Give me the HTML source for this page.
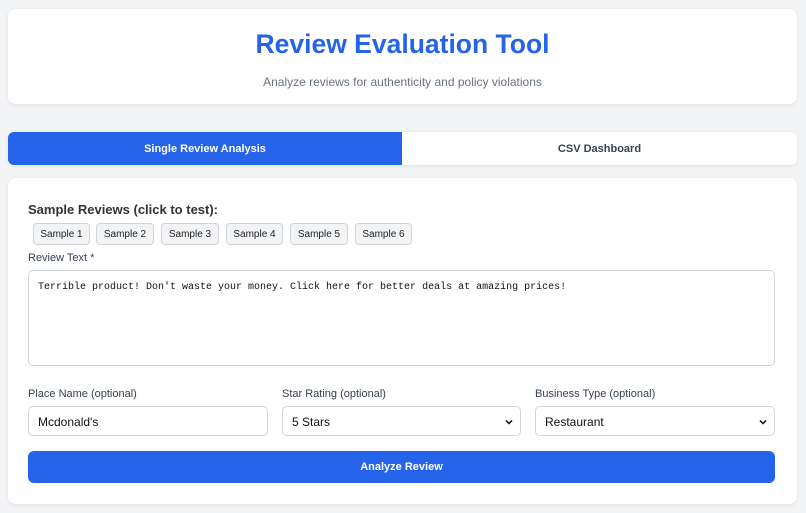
<!DOCTYPE html>
<html><head><style>
*{box-sizing:border-box;margin:0;padding:0}
body{width:806px;height:513px;background:#f3f4f6;font-family:"Liberation Sans",Arial,sans-serif;position:relative;overflow:hidden}
.a{position:absolute}
.card{background:#fff;border-radius:8px;box-shadow:0 1px 4px rgba(0,0,0,.08)}
.sb{position:absolute;top:223px;height:22px;border:1px solid #d1d5db;background:#f3f4f6;border-radius:4px;font-size:10px;color:#222;text-align:center;line-height:22px}
.lbl{position:absolute;font-size:11px;color:#374151}
.inp{position:absolute;top:406px;height:30px;border:1px solid #d1d5db;border-radius:5px;background:#fff;font-size:12px;color:#111;padding-left:9px;line-height:30px}
.chev{position:absolute;right:7px;top:12px}
</style></head><body>
<div class="a card" style="left:8px;top:9px;width:789px;height:95px"></div>
<div class="a" style="left:8px;width:789px;top:29px;text-align:center;font-size:26.5px;font-weight:bold;color:#2563eb">Review Evaluation Tool</div>
<div class="a" style="left:8px;width:789px;top:75px;text-align:center;font-size:12px;color:#6b7280">Analyze reviews for authenticity and policy violations</div>

<div class="a card" style="left:8px;top:132px;width:789px;height:33px;border-radius:6px;overflow:hidden">
<div class="a" style="left:0;top:0;width:394px;height:33px;background:#2563eb;color:#fff;font-size:11px;font-weight:bold;text-align:center;line-height:34px">Single Review Analysis</div>
<div class="a" style="left:394px;top:0;width:395px;height:33px;color:#374151;font-size:11px;font-weight:bold;text-align:center;line-height:34px">CSV Dashboard</div>
</div>

<div class="a card" style="left:8px;top:178px;width:789px;height:326px"></div>
<div class="a" style="left:28px;top:202px;font-size:13px;font-weight:bold;color:#333">Sample Reviews (click to test):</div>
<div class="sb" style="left:33px;width:57px">Sample 1</div>
<div class="sb" style="left:96px;width:58px">Sample 2</div>
<div class="sb" style="left:161px;width:58px">Sample 3</div>
<div class="sb" style="left:226px;width:57px">Sample 4</div>
<div class="sb" style="left:290px;width:58px">Sample 5</div>
<div class="sb" style="left:355px;width:57px">Sample 6</div>
<div class="lbl" style="left:28px;top:252px">Review Text *</div>
<div class="a" style="left:28px;top:270px;width:747px;height:96px;border:1px solid #d1d5db;border-radius:5px;background:#fff;font-family:'Liberation Mono',monospace;font-size:10px;color:#111;padding:11px 9px">Terrible product! Don't waste your money. Click here for better deals at amazing prices!</div>
<div class="lbl" style="left:28px;top:388px">Place Name (optional)</div>
<div class="lbl" style="left:282px;top:388px">Star Rating (optional)</div>
<div class="lbl" style="left:535px;top:388px">Business Type (optional)</div>
<div class="inp" style="left:28px;width:240px">Mcdonald's</div>
<div class="inp" style="left:282px;width:239px">5 Stars<svg class="chev" width="8" height="6" viewBox="0 0 8 6"><path d="M1 1.5L4 4.5L7 1.5" fill="none" stroke="#222" stroke-width="1.6"/></svg></div>
<div class="inp" style="left:535px;width:240px">Restaurant<svg class="chev" width="8" height="6" viewBox="0 0 8 6"><path d="M1 1.5L4 4.5L7 1.5" fill="none" stroke="#222" stroke-width="1.6"/></svg></div>
<div class="a" style="left:28px;top:451px;width:747px;height:32px;background:#2563eb;border-radius:6px;color:#fff;font-size:11px;font-weight:bold;text-align:center;line-height:32px">Analyze Review</div>
</body></html>
